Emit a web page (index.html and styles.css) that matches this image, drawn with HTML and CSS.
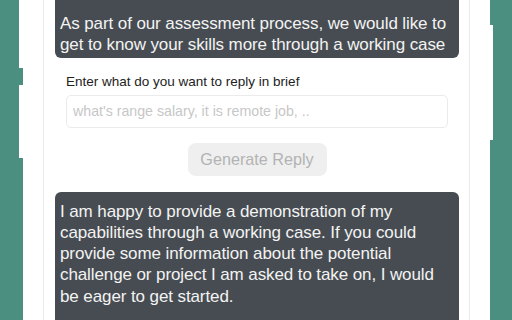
FILE: index.html
```html
<!DOCTYPE html>
<html>
<head>
<meta charset="utf-8">
<link rel="stylesheet" href="styles.css">
</head>
<body>
<div class="panel">
  <div class="card">
    <div class="bubble bubble-top">As part of our assessment process, we would like to<br>get to know your skills more through a working case</div>
    <div class="form">
      <label class="label">Enter what do you want to reply in brief</label>
      <input class="input" type="text" placeholder="what's range salary, it is remote job, ..">
      <div class="actions"><button class="btn">Generate Reply</button></div>
    </div>
    <div class="bubble bubble-reply">I am happy to provide a demonstration of my<br>capabilities through a working case. If you could<br>provide some information about the potential<br>challenge or project I am asked to take on, I would<br>be eager to get started.</div>
  </div>
</div>
</body>
</html>
```
FILE: styles.css
```css
html, body {
  margin: 0;
  padding: 0;
  height: 320px;
  overflow: hidden;
  background: #4b8f80;
  font-family: "Liberation Sans", Arial, sans-serif;
}
.panel {
  position: relative;
  margin: 0 22px 0 23px;
  height: 320px;
  background: #fff;
}
.panel::before {
  content: "";
  position: absolute;
  left: -4px;
  top: 0;
  width: 4px;
  height: 158px;
  background: #fff;
}
.panel::after {
  content: "";
  position: absolute;
  right: -3px;
  top: 25px;
  width: 3px;
  height: 115px;
  background: #fff;
}
.card {
  margin: 0 20px;
  height: 320px;
  border-left: 1px solid #e9ebeb;
  border-right: 1px solid #e9ebeb;
  padding: 0 10px 0 11px;
  position: relative;
}
.card::before {
  content: "";
  position: absolute;
  left: -25px;
  top: 68px;
  width: 4px;
  height: 17px;
  background: #4b8f80;
}
.bubble {
  background: #464c51;
  color: #f3f3f3;
  font-size: 17px;
  line-height: 21.25px;
  letter-spacing: -0.1px;
  white-space: nowrap;
  border-radius: 6px;
  padding: 9px 5px;
}
.bubble-top {
  border-radius: 0 0 6px 6px;
  padding-top: 13px;
  padding-bottom: 2px;
}
.form {
  padding: 16px 11px 0 11px;
  display: flex;
  flex-direction: column;
}
.label {
  font-size: 13.5px;
  line-height: 16px;
  color: #222;
}
.input {
  margin-top: 5px;
  height: 33px;
  box-sizing: border-box;
  border: 1px solid #ebebeb;
  border-radius: 5px;
  padding: 0 6px;
  font-family: "Liberation Sans", Arial, sans-serif;
  font-size: 14.2px;
  outline: none;
}
.input::placeholder {
  color: #c7c7c7;
}
.actions {
  display: flex;
  justify-content: center;
  margin-top: 15px;
}
.btn {
  width: 139px;
  height: 33px;
  border: none;
  border-radius: 8px;
  background: #efefef;
  color: #b3b3b3;
  font-family: "Liberation Sans", Arial, sans-serif;
  font-size: 16.2px;
  padding: 0;
}
.bubble-reply {
  margin-top: 16px;
  padding-bottom: 40px;
}
```
